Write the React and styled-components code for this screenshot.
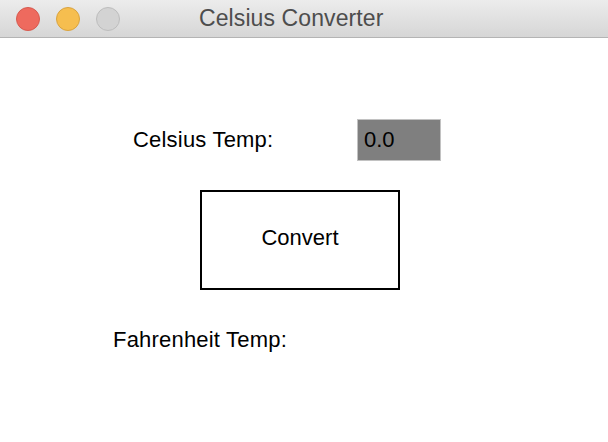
import React from "react";
import styled, { createGlobalStyle } from "styled-components";

const Global = createGlobalStyle`
  html, body { margin: 0; padding: 0; background: #ffffff; }
  body { font-family: "Liberation Sans", Arial, sans-serif; }
`;

const Window = styled.div`
  width: 608px;
  height: 442px;
  background: #ffffff;
  display: flex;
  flex-direction: column;
  overflow: hidden;
`;

const TitleBar = styled.div`
  height: 37px;
  flex: 0 0 auto;
  display: flex;
  align-items: center;
  padding-left: 16px;
  background: linear-gradient(#ececec, #d6d6d6);
  border-bottom: 1px solid #b4b4b4;
`;

const Lights = styled.div`
  display: flex;
  gap: 16px;
`;

const Light = styled.span`
  width: 22px;
  height: 22px;
  border-radius: 50%;
  background: ${(p) => p.$fill};
  border: 1px solid ${(p) => p.$edge};
`;

const Title = styled.div`
  margin-left: 79px;
  font-size: 23px;
  color: #4d4d4d;
  line-height: 1;
  letter-spacing: 0.1px;
`;

const Content = styled.div`
  display: flex;
  flex-direction: column;
  align-items: flex-start;
  padding-top: 81px;
`;

const Row = styled.div`
  display: flex;
  align-items: center;
  padding-left: ${(p) => p.$indent}px;
`;

const Label = styled.span`
  font-size: 22px;
  letter-spacing: 0.2px;
  color: #000;
  width: ${(p) => (p.$width ? `${p.$width}px` : "auto")};
`;

const Field = styled.div`
  box-sizing: border-box;
  width: 84px;
  height: 42px;
  background: #7f7f7f;
  border: 1px solid #c2c2c2;
  display: flex;
  align-items: center;
  padding-left: 6px;
  font-size: 22px;
  color: #000;
`;

const ConvertButton = styled.button`
  box-sizing: border-box;
  margin-top: 29px;
  margin-left: 200px;
  width: 200px;
  height: 100px;
  border: 2px solid #000;
  background: #fff;
  font-family: "Liberation Sans", Arial, sans-serif;
  font-size: 22px;
  color: #000;
  padding: 0 0 5px 0;
  cursor: pointer;
`;

const ResultRow = styled(Row)`
  margin-top: 37px;
`;

export default function App() {
  return (
    <>
      <Global />
      <Window>
        <TitleBar>
          <Lights>
            <Light $fill="#ee6a5e" $edge="#d75a4f" />
            <Light $fill="#f6be4f" $edge="#d9a33f" />
            <Light $fill="#d3d3d3" $edge="#bdbdbd" />
          </Lights>
          <Title>Celsius Converter</Title>
        </TitleBar>
        <Content>
          <Row $indent={133}>
            <Label $width={224}>Celsius Temp:</Label>
            <Field>0.0</Field>
          </Row>
          <ConvertButton>Convert</ConvertButton>
          <ResultRow $indent={113}>
            <Label>Fahrenheit Temp:</Label>
          </ResultRow>
        </Content>
      </Window>
    </>
  );
}
